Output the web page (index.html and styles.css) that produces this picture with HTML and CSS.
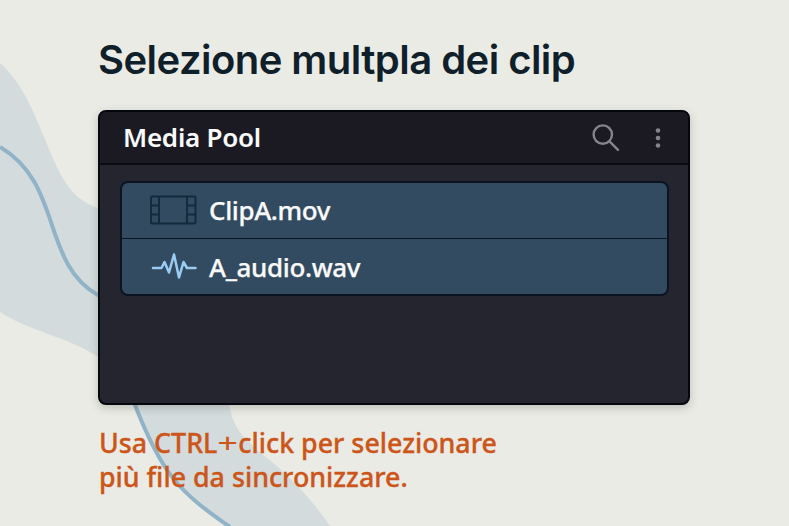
FILE: index.html
```
<!DOCTYPE html>
<html lang="it">
<head>
    <meta charset="UTF-8">
    <meta name="viewport" content="width=device-width, initial-scale=1.0">
    <title>Selezione multpla dei clip</title>
    <link rel="stylesheet" href="styles.css">
</head>
<body>

    <!-- Decorative waves behind the content -->
    <svg class="waves" viewBox="0 0 789 526" aria-hidden="true">
        <path class="wave-band" d="M0 63 C22 83 33 110 44 137 C60 176 69 198 98 208 L180 300 L229 400 C231 428 244 438 262 454 C288 474 311 498 330 526 L230 526 C178 491 162 474 135 405 L98 357 C67 336 30 332 0 312 Z"/>
        <path class="wave-line" d="M0 147 C63 184 41 263 98 295 C120 320 125 375 135 405 C162 474 178 491 230 527"/>
    </svg>

    <main class="slide">
        <h1 class="slide-title">Selezione multpla dei clip</h1>

        <section class="media-pool">
            <header class="pool-header">
                <h2 class="pool-title">Media Pool</h2>
                <div class="pool-actions">
                    <svg class="icon-search" viewBox="0 0 28 28">
                        <circle cx="10.8" cy="10.6" r="9.2"/>
                        <path d="M17.5 17.3 L26 25.8"/>
                    </svg>
                    <svg class="icon-more" viewBox="0 0 6 22">
                        <circle cx="3" cy="3.5" r="2.3"/>
                        <circle cx="3" cy="11" r="2.3"/>
                        <circle cx="3" cy="18.5" r="2.3"/>
                    </svg>
                </div>
            </header>

            <ul class="clip-list">
                <li class="clip">
                    <svg class="clip-icon icon-film" viewBox="0 0 48 32">
                        <rect x="2" y="2.5" width="44.5" height="27" rx="1"/>
                        <path d="M10 2.5V29.5M38 2.5V29.5M2 11.5H10M2 20.5H10M38 11.5H46.5M38 20.5H46.5"/>
                    </svg>
                    <span class="clip-name">ClipA.mov</span>
                </li>
                <li class="clip">
                    <svg class="clip-icon icon-wave" viewBox="0 0 48 32">
                        <path d="M4 17H12.5L15.5 11L20 21.5L25 3.5L30 26.5L34.5 11L38 17H46.5"/>
                    </svg>
                    <span class="clip-name">A_audio.wav</span>
                </li>
            </ul>
        </section>

        <p class="hint">
            <span class="hint-line">Usa CTRL<span class="hint-plus">+</span>click per selezionare</span>
            <span class="hint-line">più file da sincronizzare.</span>
        </p>
    </main>

</body>
</html>
```
FILE: styles.css
```
* {
    box-sizing: border-box;
}

body {
    margin: 0;
    height: 526px;
    overflow: hidden;
    background-color: #eaebe5;
    font-family: "Noto Sans", sans-serif;
    font-weight: 500;
}

/* --- Background --- */
.waves {
    position: absolute;
    top: 0;
    left: 0;
    width: 789px;
    height: 526px;
}

.wave-band {
    fill: #d3dbdc;
}

.wave-line {
    fill: none;
    stroke: #91b3c8;
    stroke-width: 4;
}

/* --- Slide --- */
.slide {
    position: relative;
    width: 592px;
    margin-left: 98px;
    padding-top: 35px;
}

.slide-title {
    margin: 0 0 24.5px;
    font-family: Inter, sans-serif;
    font-size: 40px;
    font-weight: 600;
    line-height: 50px;
    letter-spacing: -0.54px;
    white-space: nowrap;
    color: #10202a;
}

/* --- Media Pool panel --- */
.media-pool {
    height: 295px;
    border: 2px solid #05070f;
    border-radius: 8px;
    background-color: #25252f;
    box-shadow: 0 3px 9px rgba(60, 60, 50, 0.25);
    overflow: hidden;
}

.pool-header {
    display: flex;
    justify-content: space-between;
    align-items: center;
    height: 53px;
    padding: 0 27px 0 23px;
    border-bottom: 2px solid #090b14;
    background-color: #1b1a22;
}

.pool-title {
    margin: 0;
    font-size: 26px;
    font-weight: 600;
    line-height: 36px;
    letter-spacing: -0.25px;
    color: #fafafc;
}

.pool-actions {
    display: flex;
    align-items: center;
    gap: 35px;
    padding-top: 2px;
}

.icon-search {
    width: 28px;
    height: 28px;
    fill: none;
    stroke: #85838b;
    stroke-width: 2.4;
    stroke-linecap: round;
}

.icon-more {
    width: 6px;
    height: 22px;
    fill: #85838b;
}

/* --- Clips --- */
.clip-list {
    height: 115px;
    margin: 16px 19px 0 20px;
    padding: 0;
    border: 2px solid #0a1422;
    border-radius: 8px;
    background-color: #334b61;
    list-style: none;
    overflow: hidden;
}

.clip {
    display: flex;
    align-items: center;
    gap: 12px;
    height: 55px;
    padding-left: 27px;
}

.clip + .clip {
    height: 56px;
    padding-top: 2px;
    border-top: 1px solid #0a1422;
}

.clip-icon {
    width: 48px;
    height: 32px;
    fill: none;
}

.icon-film {
    stroke: #142a3d;
    stroke-width: 2;
}

.icon-wave {
    stroke: #9accf4;
    stroke-width: 2.5;
    stroke-linecap: round;
    stroke-linejoin: round;
}

.clip-name {
    font-size: 26px;
    line-height: 36px;
    letter-spacing: -0.37px;
    color: #fafafc;
    -webkit-text-stroke: 0.25px #fafafc;
}

/* --- Hint --- */
.hint {
    margin: 21.5px 0 0 1px;
    font-size: 26.8px;
    line-height: 34px;
    color: #cc5519;
    -webkit-text-stroke: 0.35px #cc5519;
}

.hint-line {
    display: block;
    white-space: nowrap;
}

.hint-plus {
    display: inline-block;
    margin: 0 2.8px;
    font-weight: 400;
    transform: scaleX(1.35);
    -webkit-text-stroke: 0;
}
```
